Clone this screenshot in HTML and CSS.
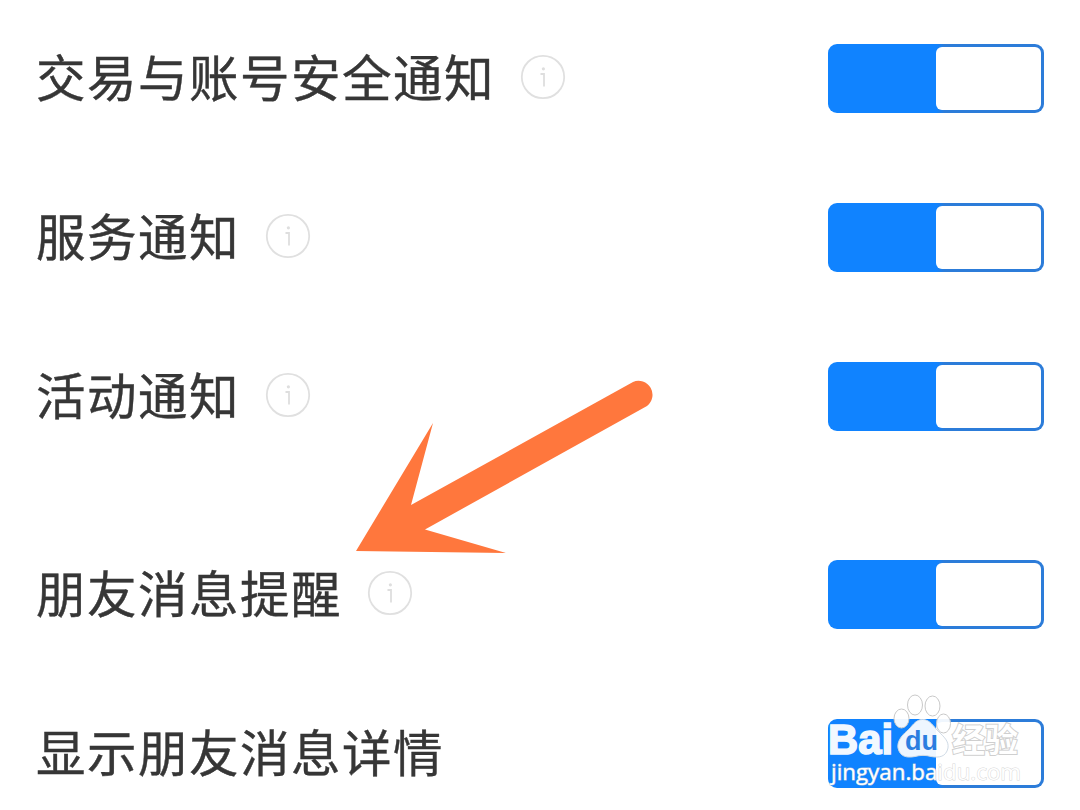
FILE: index.html
```html
<!DOCTYPE html>
<html lang="zh-CN">
<head>
    <meta charset="UTF-8">
    <meta name="viewport" content="width=device-width, initial-scale=1.0">
    <title>通知设置</title>
    <link rel="stylesheet" href="styles.css">
</head>
<body>
    <svg class="symbols">
        <symbol id="info" viewBox="0 0 46 46">
            <circle cx="23" cy="23" r="21.2" fill="none" stroke="#e0e0e0" stroke-width="1.8"/>
            <circle cx="23.4" cy="14.8" r="1.6" fill="#dedede"/>
            <path d="M20.5 20H24V32.5" fill="none" stroke="#dedede" stroke-width="1.8"/>
        </symbol>
    </svg>

    <div class="settings">
        <div class="group">
            <div class="row">
                <span class="label">交易与账号安全通知</span>
                <svg class="info"><use href="#info"/></svg>
                <div class="switch"><div class="knob"></div></div>
            </div>
            <div class="row">
                <span class="label">服务通知</span>
                <svg class="info"><use href="#info"/></svg>
                <div class="switch"><div class="knob"></div></div>
            </div>
            <div class="row">
                <span class="label">活动通知</span>
                <svg class="info"><use href="#info"/></svg>
                <div class="switch"><div class="knob"></div></div>
            </div>
        </div>
        <div class="group">
            <div class="row">
                <span class="label">朋友消息提醒</span>
                <svg class="info"><use href="#info"/></svg>
                <div class="switch"><div class="knob"></div></div>
            </div>
            <div class="row">
                <span class="label">显示朋友消息详情</span>
                <div class="switch"><div class="knob"></div></div>
            </div>
        </div>
    </div>

    <svg class="arrow" viewBox="0 0 300 176">
        <path d="M0 173L77 45L55 127L277 4A14 14 0 0 1 291 28L69 151.500L150 175Z" fill="#ff773d"/>
    </svg>

    <svg class="watermark" viewBox="0 0 210 110">
        <g fill="#fff" fill-opacity=".93" stroke="#c9c9c9" stroke-width="1">
            <ellipse cx="78.500" cy="27.500" rx="7.500" ry="9.500"/>
            <ellipse cx="92" cy="14" rx="7.500" ry="10"/>
            <ellipse cx="109.500" cy="15" rx="7.500" ry="10"/>
            <ellipse cx="120.500" cy="32.500" rx="7" ry="9.500"/>
        </g>
        <path d="M99.500 28.500C92 28.500 89 36 84 40C78 45 74 51 75 57C77 66 84 67 92 65.500C97 64 103 64 108 65.500C116 67 123 66 125 57C126 50 121 46 115 40C110 35 107 28.500 99.500 28.500Z" fill="#fff" fill-opacity=".93" stroke="#d0dbe6"/>
        <text class="brand" x="5" y="63" textLength="65" lengthAdjust="spacingAndGlyphs">Bai</text>
        <text class="du" x="82" y="59" textLength="33" lengthAdjust="spacingAndGlyphs">du</text>
        <text class="cn" x="129" y="61" textLength="66" lengthAdjust="spacingAndGlyphs">经验</text>
        <text class="site" x="8" y="89" textLength="190" lengthAdjust="spacingAndGlyphs">jingyan.baidu.com</text>
    </svg>
</body>
</html>
```

FILE: styles.css
```css
body {
    margin: 0;
    position: relative;
    height: 810px;
    overflow: hidden;
    background-color: #fff;
    font-family: "Noto Sans CJK SC", sans-serif;
}

.symbols {
    display: none;
}

.settings {
    display: flex;
    flex-direction: column;
    gap: 130px;
    padding: 44px 36px 0 36px;
}

.group {
    display: flex;
    flex-direction: column;
    gap: 91px;
}

.row {
    display: flex;
    align-items: center;
    height: 68px;
}

.label {
    margin-top: -5px;
    color: #363636;
    font-size: 49.5px;
    line-height: 68px;
    letter-spacing: 1.5px;
    white-space: nowrap;
    -webkit-text-stroke: 0.4px #363636;
}

.info {
    width: 46px;
    height: 46px;
    margin: -2px 0 0 25px;
}

.switch {
    display: flex;
    justify-content: flex-end;
    box-sizing: border-box;
    width: 216px;
    height: 69px;
    margin-left: auto;
    padding: 3px;
    border-radius: 9px;
    background: linear-gradient(to right, #1083ff 50%, #2c7cd9 54%);
}

.knob {
    width: 105px;
    border-radius: 6px;
    background-color: #fff;
}

.arrow {
    position: absolute;
    left: 356px;
    top: 378px;
    width: 300px;
    height: 176px;
}

/* logo over the last switch */
.watermark {
    position: absolute;
    left: 823px;
    top: 691px;
    width: 210px;
    height: 110px;
}

.watermark text {
    fill: #fff;
    stroke: #cfcfcf;
    paint-order: stroke;
}

.watermark .brand {
    font: bold 42px "Liberation Sans", sans-serif;
    fill: #f2f8ff;
    stroke: #f2f8ff;
    stroke-width: 1.6px;
}

.watermark .du {
    font: bold 27px "Liberation Sans", sans-serif;
    fill: #2b7ee0;
    stroke: none;
}

.watermark .cn {
    font: bold 33px "Noto Sans CJK SC", sans-serif;
    stroke-width: 2px;
}

.watermark .site {
    font: 500 21.5px "Open Sans", sans-serif;
    stroke: rgba(205, 205, 205, 0.8);
    stroke-width: 1px;
}
```
